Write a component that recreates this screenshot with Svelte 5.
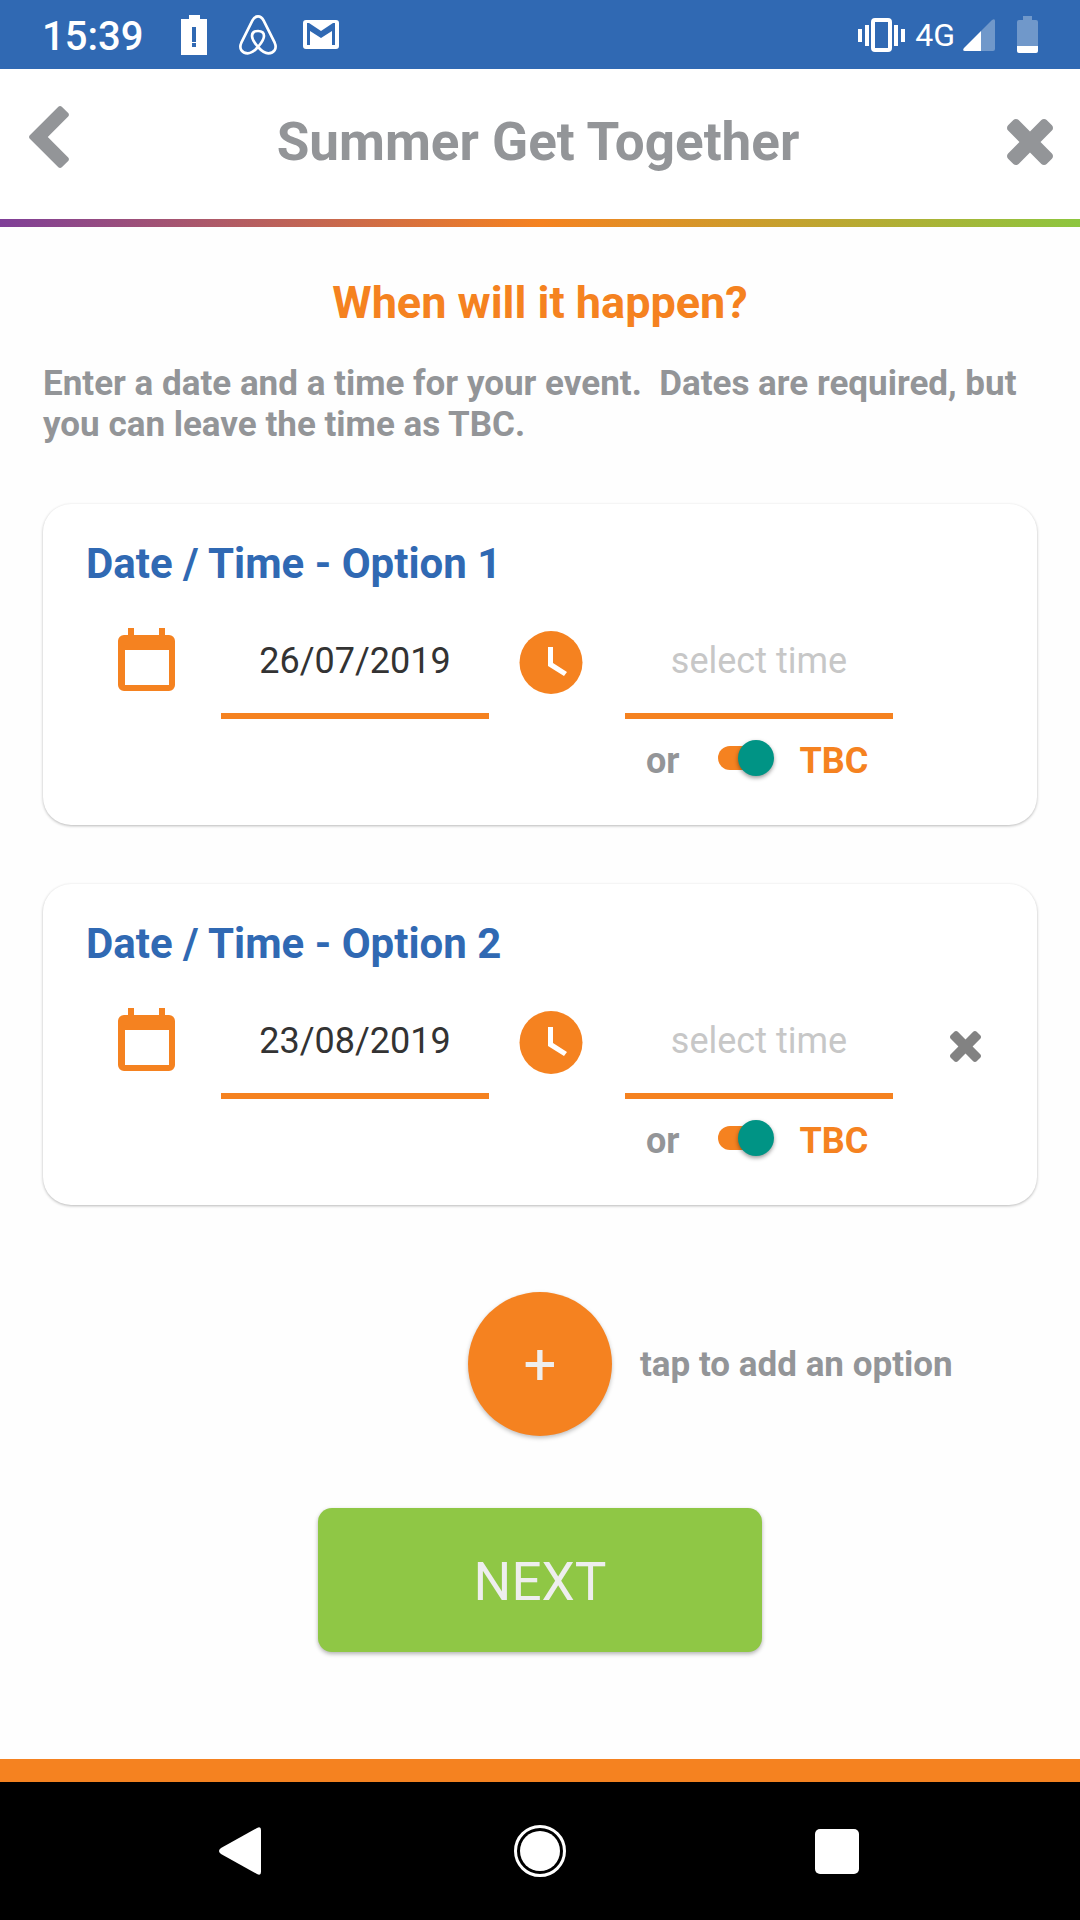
<script>
  let options = [
    { id: 1, date: '26/07/2019', time: '', tbc: true },
    { id: 2, date: '23/08/2019', time: '', tbc: true }
  ];
  let nextId = 3;

  const addOption = () => {
    options = [...options, { id: nextId, date: '', time: '', tbc: true }];
    nextId += 1;
  };
  const removeOption = (id) => { options = options.filter((o) => o.id !== id); };
</script>

<div class="screen">
  <div class="status-bar">
    <div class="status-left">
      <span class="clock">15:39</span>
      <svg class="battery-alert" width="26" height="40" viewBox="0 0 26 40" aria-hidden="true">
        <path fill="#fff" fill-rule="evenodd" d="M8 0h11v4h7v36H0V4h8zM11 12v15h4V12zM11 28v4h4v-4z" />
      </svg>
      <svg class="airbnb" width="38" height="40" viewBox="715 43 114 120" aria-hidden="true">
        <path fill="none" stroke="#fff" stroke-width="8" d="M772 47c8 0 13 5 17 13l33 66c8 18-2 32-19 32c-12 0-21-8-31-19c-12-14-18-24-18-33c0-10 7-15 18-15s18 5 18 15c0 9-6 19-18 33c-10 11-19 19-31 19c-17 0-27-14-19-32l33-66c4-8 9-13 17-13z" />
      </svg>
      <svg class="gmail" width="36" height="29" viewBox="0 0 36 29" aria-hidden="true">
        <path fill="#fff" fill-rule="evenodd" d="M3 0h30a3 3 0 0 1 3 3v23a3 3 0 0 1-3 3H3a3 3 0 0 1-3-3V3a3 3 0 0 1 3-3zM4 3v22h3V11l11 7 11-7v14h3V3h-2L18 11 6 3z" />
      </svg>
    </div>
    <div class="status-right">
      <svg width="47" height="34" viewBox="0 0 47 34" aria-hidden="true">
        <rect x="15" y="2" width="17" height="30" rx="2" fill="none" stroke="#fff" stroke-width="4" />
        <path fill="#fff" d="M0 11h4v13H0zM7 7h4v21H7zM36 7h4v21h-4zM43 11h4v13h-4z" />
      </svg>
      <span class="network">4G</span>
      <svg class="signal" width="32" height="32" viewBox="0 0 32 32" aria-hidden="true">
        <path fill="#7098ca" d="M18 12 29 1q3-2 3 1v28q0 2-2 2H18z" />
        <path fill="#fff" d="M18 12v20H2q-3 0-1-3z" />
      </svg>
      <svg class="battery" width="21" height="37" viewBox="0 0 21 37" aria-hidden="true">
        <path fill="#7098ca" d="M6 0h9v4h4q2 0 2 2v24H0V6q0-2 2-2h4z" />
        <path fill="#fff" d="M0 30h21v5q0 2-2 2H2q-2 0-2-2z" />
      </svg>
    </div>
  </div>

  <header>
    <button class="icon-button back" aria-label="Back">
      <svg width="40" height="62" viewBox="410 26 1036 1612" aria-hidden="true">
        <path fill="currentColor" d="M1427 301l-531 531 531 531q19 19 19 45t-19 45l-166 166q-19 19-45 19t-45-19l-742-742q-19-19-19-45t19-45l742-742q19-19 45-19t45 19l166 166q19 19 19 45t-19 45z" />
      </svg>
    </button>
    <h1>Summer Get Together</h1>
    <button class="icon-button close" aria-label="Close">
      <svg width="46" height="46" viewBox="110 366 1188 1188" aria-hidden="true">
        <path fill="currentColor" d="M1298 1322q0 40-28 68l-136 136q-28 28-68 28t-68-28l-294-294-294 294q-28 28-68 28t-68-28l-136-136q-28-28-28-68t28-68l294-294-294-294q-28-28-28-68t28-68l136-136q28-28 68-28t68 28l294 294 294-294q28-28 68-28t68 28l136 136q28 28 28 68t-28 68l-294 294 294 294q28 28 28 68z" />
      </svg>
    </button>
  </header>
  <div class="rainbow"></div>

  <main>
    <h2>When will it happen?</h2>
    <p class="intro">Enter a date and a time for your event.&nbsp; Dates are required, but you can leave the time as TBC.</p>

    {#each options as option, i (option.id)}
      <section class="card">
        <h3>Date / Time - Option {i + 1}</h3>
        <div class="fields">
          <label class="field-icon" for="date-{option.id}" aria-label="Date">
            <svg width="66" height="66" viewBox="0 0 66 66" aria-hidden="true">
              <path fill="#f58220" fill-rule="evenodd" d="M14 0h6v7h25V0h6v7h4a6 6 0 0 1 6 6v44a6 6 0 0 1-6 6H10a6 6 0 0 1-6-6V13a6 6 0 0 1 6-6h4zM11 22v35h44V22z" />
            </svg>
          </label>
          <input class="field" id="date-{option.id}" type="text" bind:value={option.date} />
          <label class="field-icon" for="time-{option.id}" aria-label="Time">
            <svg width="66" height="66" viewBox="0 0 66 66" aria-hidden="true">
              <circle cx="33" cy="34.5" r="31.5" fill="#f58220" />
              <path fill="#fff" d="M30 19h5v16l14 9-3 4-16-10z" />
            </svg>
          </label>
          <input class="field" id="time-{option.id}" type="text" placeholder="select time" bind:value={option.time} />
          {#if i > 0}
            <button class="icon-button remove" aria-label="Remove option {i + 1}" on:click={() => removeOption(option.id)}>
              <svg width="31" height="31" viewBox="110 366 1188 1188" aria-hidden="true">
                <path fill="currentColor" d="M1298 1322q0 40-28 68l-136 136q-28 28-68 28t-68-28l-294-294-294 294q-28 28-68 28t-68-28l-136-136q-28-28-28-68t28-68l294-294-294-294q-28-28-28-68t28-68l136-136q28-28 68-28t68 28l294 294 294-294q28-28 68-28t68 28l136 136q28 28 28 68t-28 68l-294 294 294 294q28 28 28 68z" />
              </svg>
            </button>
          {/if}
          <div class="tbc">
            <span>or</span>
            <input class="switch" id="tbc-{option.id}" type="checkbox" bind:checked={option.tbc} />
            <label for="tbc-{option.id}">TBC</label>
          </div>
        </div>
      </section>
    {/each}

    <div class="add-row">
      <button class="add" id="add-option" aria-labelledby="add-label" on:click={addOption}>+</button>
      <label id="add-label" for="add-option">tap to add an option</label>
    </div>

    <button class="next">NEXT</button>
  </main>

  <div class="bottom-strip"></div>
  <nav>
    <button aria-label="System back">
      <svg width="52" height="52" viewBox="0 0 52 52" aria-hidden="true">
        <path fill="#fff" d="M4 23 40 3q4-2 4 2v42q0 4-4 2L4 29q-4-3 0-6z" />
      </svg>
    </button>
    <button aria-label="Home">
      <svg width="52" height="52" viewBox="0 0 52 52" aria-hidden="true">
        <circle cx="26" cy="26" r="24.5" fill="none" stroke="#fff" stroke-width="3" />
        <circle cx="26" cy="26" r="20" fill="#fff" />
      </svg>
    </button>
    <button aria-label="Recent apps">
      <svg width="52" height="52" viewBox="0 0 52 52" aria-hidden="true">
        <rect x="4" y="4" width="44" height="45" rx="5" fill="#fff" />
      </svg>
    </button>
  </nav>
</div>

<style>
  :global(body) { background: #fefefe; }
  .screen { display: flex; flex-direction: column; min-height: 100vh; font-family: Roboto, "Liberation Sans", sans-serif; font-size: 36px; line-height: 42px; color: #939598; }
  h1, h2, h3, p { margin: 0; }
  button { border: none; padding: 0; font-family: inherit; cursor: pointer; }
  svg { display: block; }

  .status-bar { display: flex; justify-content: space-between; align-items: center; height: 69px; padding: 0 42px; background: #3069b3; color: #fff; }
  .status-left, .status-right { display: flex; align-items: center; }
  .clock { padding-top: 4px; font-size: 40px; font-weight: 500; }
  .battery-alert { margin-left: 38px; }
  .airbnb { margin-left: 32px; }
  .gmail { margin-left: 26px; }
  .network { margin-left: 10px; font-size: 32px; }
  .signal { margin-left: 8px; }
  .battery { margin-left: 22px; }

  header { display: flex; justify-content: space-between; align-items: center; height: 150px; padding: 0 27px 5px 29px; box-sizing: border-box; background: #fff; }
  h1 { font-size: 53px; line-height: 60px; font-weight: 700; }
  .icon-button { background: transparent; color: #939598; }
  .back { padding-bottom: 9px; }
  .rainbow { height: 8px; background: linear-gradient(90deg, #7f3f98, #f58220 50%, #8dc63f); }

  main { flex: 1; display: flex; flex-direction: column; padding: 49px 43px 107px; }
  h2 { font-size: 45px; line-height: 53px; font-weight: 700; color: #f58220; text-align: center; }
  .intro { margin-top: 34px; font-size: 35px; line-height: 41px; font-weight: 700; }

  .card { margin-top: 59px; padding: 35px 0 43px; border-radius: 28px; background: #fff; box-shadow: 0 1px 3px rgba(0, 0, 0, 0.28); }
  h3 { padding: 0 43px; font-size: 42px; line-height: 50px; font-weight: 700; color: #3069b3; }
  .fields { display: grid; grid-template-columns: 136px 1fr 136px 1fr 144px; margin: 35px 0 0 42px; }
  .field-icon { display: flex; justify-content: center; padding: 4px 13px 0 0; }
  .field { min-width: 0; padding: 16px 0 31px; border: none; border-bottom: 6px solid #f58220; background: transparent; font: inherit; color: #333; text-align: center; outline: none; }
  .field::placeholder { color: #c7c7c7; opacity: 1; }
  .remove { display: flex; justify-content: center; align-items: center; padding-bottom: 10px; color: #828282; }
  .tbc { grid-column: 4; display: flex; align-items: flex-start; margin-top: 21px; padding-left: 21px; font-weight: 700; }
  .tbc label { color: #f58220; }

  .switch { appearance: none; position: relative; width: 56px; height: 36px; margin: 0 26px 0 38px; cursor: pointer; }
  .switch::before { content: ''; position: absolute; left: 0; right: 2px; top: 6px; height: 24px; border-radius: 12px; background: #f58220; }
  .switch::after { content: ''; position: absolute; left: 0; top: 0; width: 36px; height: 36px; border-radius: 50%; background: #ececec; box-shadow: 0 2px 4px rgba(0, 0, 0, 0.4); }
  .switch:checked::after { left: auto; right: 0; background: #009485; }

  .add-row { display: grid; grid-template-columns: 1fr auto 1fr; align-items: center; column-gap: 28px; margin-top: 87px; font-weight: 700; }
  .add-row label { padding-top: 2px; font-size: 35px; }
  .add { grid-column: 2; width: 144px; height: 144px; border-radius: 50%; background: #f58220; color: #eee; font-size: 58px; box-shadow: 0 2px 4px rgba(0, 0, 0, 0.25); }
  .next { align-self: center; width: 444px; height: 144px; margin-top: 72px; padding-top: 3px; border-radius: 14px; background: #8fc745; color: #eee; font-size: 53px; box-shadow: 0 2px 4px rgba(0, 0, 0, 0.3); }

  .bottom-strip { height: 23px; background: #f58220; }
  nav { display: flex; justify-content: center; align-items: center; gap: 245px; height: 138px; background: #000; }
  nav button { background: transparent; }
</style>
